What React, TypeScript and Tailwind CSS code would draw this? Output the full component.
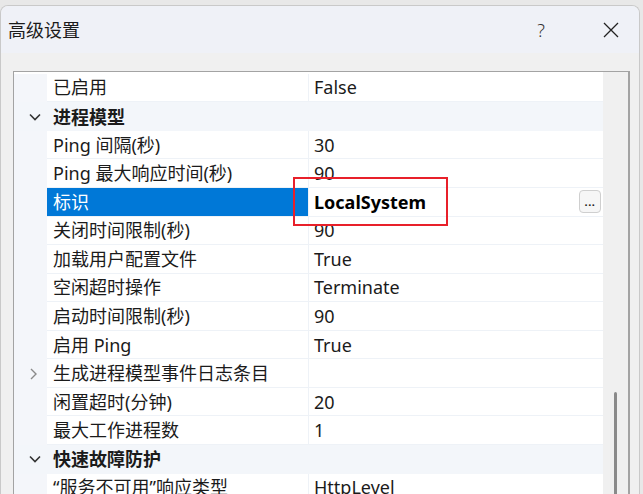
import React from "react";

type Row =
  | { kind: "cat"; name: string; open: boolean }
  | { kind: "prop"; name: string; value: string; selected?: boolean; collapsed?: boolean };

const rows: Row[] = [
  { kind: "prop", name: "已启用", value: "False" },
  { kind: "cat", name: "进程模型", open: true },
  { kind: "prop", name: "Ping 间隔(秒)", value: "30" },
  { kind: "prop", name: "Ping 最大响应时间(秒)", value: "90" },
  { kind: "prop", name: "标识", value: "LocalSystem", selected: true },
  { kind: "prop", name: "关闭时间限制(秒)", value: "90" },
  { kind: "prop", name: "加载用户配置文件", value: "True" },
  { kind: "prop", name: "空闲超时操作", value: "Terminate" },
  { kind: "prop", name: "启动时间限制(秒)", value: "90" },
  { kind: "prop", name: "启用 Ping", value: "True" },
  { kind: "prop", name: "生成进程模型事件日志条目", value: "", collapsed: true },
  { kind: "prop", name: "闲置超时(分钟)", value: "20" },
  { kind: "prop", name: "最大工作进程数", value: "1" },
  { kind: "cat", name: "快速故障防护", open: true },
  { kind: "prop", name: "“服务不可用”响应类型", value: "HttpLevel" },
];

function ChevronDown() {
  return (
    <svg width="12" height="8" viewBox="0 0 12 8" className="text-[#333]">
      <polyline points="1,1.5 6,6.5 11,1.5" fill="none" stroke="currentColor" strokeWidth="1.6" />
    </svg>
  );
}

function ChevronRight() {
  return (
    <svg width="7" height="12" viewBox="0 0 7 12" className="text-[#8a8a8a]">
      <polyline points="1,1 6,6 1,11" fill="none" stroke="currentColor" strokeWidth="1.4" />
    </svg>
  );
}

export default function App() {
  return (
    <div
      className="relative w-[643px] h-[494px] overflow-hidden bg-[#e8e8e8] pt-[5px] text-[#1b1b1b]"
      style={{ fontFamily: '"Noto Sans", "Noto Sans CJK SC", sans-serif' }}
    >
      <div className="w-[640px] h-full rounded-t-[8px] border-t border-l border-r border-[#c9c9c9] bg-[#f0f0f0] overflow-hidden">
        {/* Title bar */}
        <div className="h-[47px] bg-[#eff1f7] flex items-center pl-[7px]">
          <span className="text-[18px] leading-none">高级设置</span>
          <span className="ml-auto mr-[58px] text-[18px] leading-none font-light text-[#333]">?</span>
          <svg width="16" height="16" viewBox="0 0 16 16" className="mr-[20px]">
            <path d="M1 1 L15 15 M15 1 L1 15" stroke="#222" strokeWidth="1.3" />
          </svg>
        </div>

        {/* Property grid */}
        <div className="pl-[12px] pt-[18px]">
          <div className="w-[617px] h-[430px] border border-r-2 border-[#a3a3a3] flex bg-white">
            <div className="w-[589px] pt-[1.7px]">
              {rows.map((r, i) =>
                r.kind === "cat" ? (
                  <div key={i} className="h-[28.57px] flex items-center bg-[#f3f6fa]">
                    <div className="w-[33px] flex justify-center pl-[8px]">
                      <ChevronDown />
                    </div>
                    <span className="pl-[6px] text-[18px] leading-none font-bold">{r.name}</span>
                  </div>
                ) : (
                  <div key={i} className="h-[28.57px] flex">
                    <div className="w-[33px] bg-[#f4f6fa] flex items-center justify-center pl-[6px]">
                      {r.collapsed && <ChevronRight />}
                    </div>
                    <div
                      className={
                        r.selected
                          ? "w-[261px] flex items-center pl-[6px] bg-[#0078d7] text-white border-b border-[#eef2f7]"
                          : "w-[261px] flex items-center pl-[6px] border-b border-[#eef2f7]"
                      }
                    >
                      <span className="text-[18px] leading-none whitespace-nowrap">{r.name}</span>
                    </div>
                    <div className="flex-1 flex items-center pl-[5px] border-l border-[#eef2f7] border-b">
                      <span
                        className={
                          r.selected
                            ? "text-[18px] leading-none font-bold text-black"
                            : "text-[18px] leading-none"
                        }
                      >
                        {r.value}
                      </span>
                      {r.selected && (
                        <div className="ml-auto mr-[2px] w-[22px] h-[23px] rounded-[4px] border border-[#cfcfcf] bg-[#f6f6f6] flex items-end justify-center pb-[5px]">
                          <span className="text-[11px] leading-none font-bold tracking-[0.5px]">...</span>
                        </div>
                      )}
                    </div>
                  </div>
                )
              )}
            </div>
            {/* Scrollbar */}
            <div className="flex-1 bg-[#f0f0f0] pt-[320px] pl-[11px]">
              <div className="w-[3px] h-[120px] rounded-full bg-[#8a8a8a]" />
            </div>
          </div>
        </div>
      </div>

      {/* Red annotation box */}
      <div className="absolute left-[293px] top-[177px] w-[155px] h-[49px] border-2 border-[#e8202a]" />
    </div>
  );
}
